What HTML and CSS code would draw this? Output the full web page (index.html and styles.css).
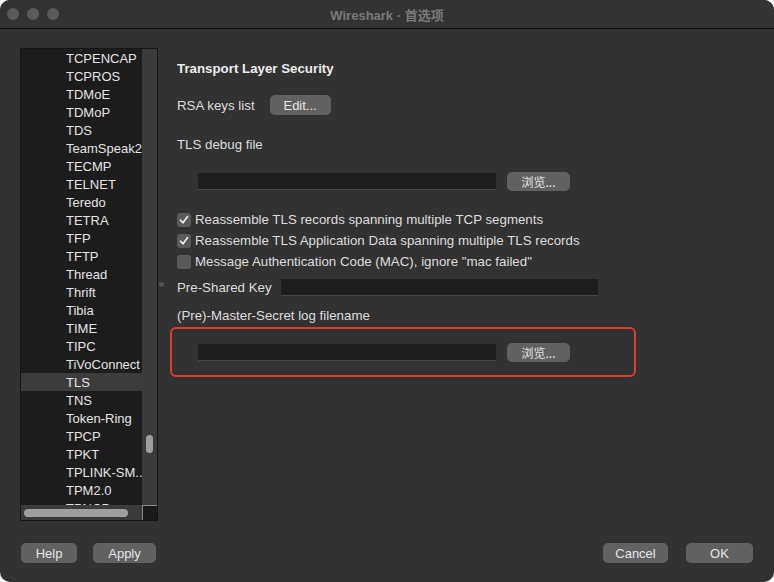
FILE: index.html
```html
<!DOCTYPE html>
<html lang="zh">
  <head>
    <meta charset="UTF-8" />
    <title>Wireshark · 首选项</title>
    <link rel="stylesheet" href="styles.css">
  </head>
  <body>
    <div class="window">
      <div class="titlebar">
        <div class="lights">
          <span class="light"></span>
          <span class="light"></span>
          <span class="light"></span>
        </div>
        <div class="title">Wireshark · 首选项</div>
      </div>

      <div class="main">
        <div class="tree">
          <div class="tree-body">
            <ul class="tree-list">
              <li>TCPENCAP</li>
              <li>TCPROS</li>
              <li>TDMoE</li>
              <li>TDMoP</li>
              <li>TDS</li>
              <li>TeamSpeak2</li>
              <li>TECMP</li>
              <li>TELNET</li>
              <li>Teredo</li>
              <li>TETRA</li>
              <li>TFP</li>
              <li>TFTP</li>
              <li>Thread</li>
              <li>Thrift</li>
              <li>Tibia</li>
              <li>TIME</li>
              <li>TIPC</li>
              <li>TiVoConnect</li>
              <li class="selected">TLS</li>
              <li>TNS</li>
              <li>Token-Ring</li>
              <li>TPCP</li>
              <li>TPKT</li>
              <li>TPLINK-SM..</li>
              <li>TPM2.0</li>
              <li>TPNCP</li>
            </ul>
            <div class="vscroll"><span class="vthumb"></span></div>
          </div>
          <div class="tree-foot">
            <div class="hscroll"><span class="hthumb"></span></div>
            <div class="corner"></div>
          </div>
        </div>

        <div class="splitter"><span class="handle"></span></div>

        <div class="pane">
          <div class="section-title">Transport Layer Security</div>

          <div class="row rsa-row">
            <span>RSA keys list</span>
            <button class="btn edit-btn">Edit...</button>
          </div>

          <div class="label debug-label">TLS debug file</div>

          <div class="file-row debug-file">
            <div class="field file-field"></div>
            <button class="btn browse-btn">浏览...</button>
          </div>

          <div class="checks">
            <label class="check-row">
              <span class="checkbox">
                <svg width="10" height="10" viewBox="0 0 10 10"><path d="M1.5 5.2 L4 7.8 L8.6 1.6" fill="none" stroke="#f0f0f0" stroke-width="1.6" stroke-linecap="round" stroke-linejoin="round"/></svg>
              </span>
              Reassemble TLS records spanning multiple TCP segments
            </label>
            <label class="check-row">
              <span class="checkbox">
                <svg width="10" height="10" viewBox="0 0 10 10"><path d="M1.5 5.2 L4 7.8 L8.6 1.6" fill="none" stroke="#f0f0f0" stroke-width="1.6" stroke-linecap="round" stroke-linejoin="round"/></svg>
              </span>
              Reassemble TLS Application Data spanning multiple TLS records
            </label>
            <label class="check-row">
              <span class="checkbox"></span>
              Message Authentication Code (MAC), ignore "mac failed"
            </label>
          </div>

          <div class="row psk-row">
            <span>Pre-Shared Key</span>
            <div class="field psk-field"></div>
          </div>

          <div class="label master-label">(Pre)-Master-Secret log filename</div>

          <div class="highlight">
            <div class="file-row">
              <div class="field file-field"></div>
              <button class="btn browse-btn">浏览...</button>
            </div>
          </div>
        </div>
      </div>

      <div class="footer">
        <div class="footer-group">
          <button class="btn help-btn">Help</button>
          <button class="btn apply-btn">Apply</button>
        </div>
        <div class="footer-group right">
          <button class="btn cancel-btn">Cancel</button>
          <button class="btn ok-btn">OK</button>
        </div>
      </div>
    </div>
  </body>
</html>
```

FILE: styles.css
```css
body {
  margin: 0;
  background-color: #ffffff;
  font-family: "Liberation Sans", Arial, "Noto Sans CJK SC", sans-serif;
  font-size: 13px;
  color: #dedede;
}

.window {
  width: 774px;
  height: 582px;
  background-color: #323232;
  border-radius: 10px;
  overflow: hidden;
  display: flex;
  flex-direction: column;
}

.titlebar {
  height: 28px;
  background-color: #333333;
  border-bottom: 1px solid #0e0e0e;
  position: relative;
  display: flex;
  align-items: center;
  justify-content: center;
}

.lights {
  position: absolute;
  left: 7px;
  top: 8px;
  display: flex;
  gap: 8px;
}

.light {
  width: 12px;
  height: 12px;
  border-radius: 50%;
  background-color: #5b5b5b;
}

.title {
  color: #7a7a7a;
  font-weight: bold;
  font-size: 13px;
  padding-top: 1px;
}

.main {
  display: flex;
  padding: 19px 0 0 20px;
  height: 473px;
}

.tree {
  width: 136px;
  height: 471px;
  border: 1px solid #151515;
  display: flex;
  flex-direction: column;
}

.tree-body {
  flex: 1;
  display: flex;
  overflow: hidden;
}

.tree-list {
  list-style: none;
  margin: 0;
  padding: 0;
  width: 121px;
  background-color: #1c1c1c;
  overflow: hidden;
}

.tree-list li {
  height: 18px;
  line-height: 19px;
  padding-left: 45px;
  white-space: nowrap;
  color: #e4e4e4;
}

.tree-list li.selected {
  background-color: #3c3c3c;
}

.vscroll {
  width: 15px;
  background-color: #3b3b3b;
  position: relative;
}

.vthumb {
  position: absolute;
  left: 4px;
  top: 386px;
  width: 7px;
  height: 18px;
  border-radius: 4px;
  background-color: #9e9e9e;
}

.tree-foot {
  height: 15px;
  display: flex;
}

.hscroll {
  width: 121px;
  background-color: #3b3b3b;
  display: flex;
  align-items: center;
  padding-left: 3px;
  box-sizing: border-box;
}

.hthumb {
  width: 104px;
  height: 8px;
  border-radius: 4px;
  background-color: #9e9e9e;
}

.corner {
  width: 14px;
  background-color: #1a1a1a;
  border-left: 1px solid #8a8a8a;
  border-top: 1px solid #8a8a8a;
}

.splitter {
  width: 19px;
  display: flex;
  align-items: center;
}

.handle {
  width: 5px;
  height: 5px;
  border-radius: 50%;
  background-color: #545454;
  margin-left: 1px;
}

.pane {
  flex: 1;
  padding-top: 12px;
  font-size: 13.3px;
}

.section-title {
  font-weight: bold;
  line-height: 18px;
  color: #ececec;
}

.row {
  display: flex;
  align-items: center;
}

.rsa-row {
  margin-top: 17px;
  height: 20px;
  gap: 15px;
}

.label {
  line-height: 18px;
}

.debug-label {
  margin-top: 21px;
}

.btn {
  font-family: inherit;
  font-size: 13px;
  color: #e6e6e6;
  background-color: #616161;
  border: none;
  border-radius: 5px;
  height: 20px;
  padding: 0;
  cursor: pointer;
}

.edit-btn {
  width: 61px;
}

.file-row {
  display: flex;
  align-items: center;
  gap: 11px;
  height: 20px;
  padding-left: 21px;
}

.debug-file {
  margin-top: 17px;
}

.field {
  background-color: #1e1e1e;
  border-bottom: 1px solid #474747;
  box-sizing: border-box;
}

.file-field {
  width: 298px;
  height: 17px;
}

.browse-btn {
  width: 63px;
  height: 19px;
  font-family: "Noto Sans CJK SC", sans-serif;
  font-size: 12px;
}

.checks {
  margin-top: 18px;
}

.check-row {
  display: flex;
  align-items: center;
  gap: 4px;
  height: 21px;
  white-space: nowrap;
}

.checkbox {
  width: 14px;
  height: 14px;
  border-radius: 3px;
  background-color: #5a5a5a;
  display: flex;
  align-items: center;
  justify-content: center;
}

.psk-row {
  margin-top: 6px;
  height: 18px;
  gap: 9px;
}

.psk-field {
  width: 317px;
  height: 17px;
}

.master-label {
  margin-top: 11px;
}

.highlight {
  margin: 2px 0 0 -7px;
  width: 466px;
  height: 50px;
  box-sizing: border-box;
  border: 2px solid #e2392b;
  border-radius: 6px;
  padding: 13px 0 0 5px;
}

.footer {
  display: flex;
  justify-content: space-between;
  padding: 22px 21px 0 21px;
}

.footer-group {
  display: flex;
  gap: 16px;
}

.footer-group.right {
  gap: 18px;
}

.help-btn {
  width: 56px;
}

.apply-btn {
  width: 63px;
}

.cancel-btn {
  width: 65px;
}

.ok-btn {
  width: 67px;
}
```
